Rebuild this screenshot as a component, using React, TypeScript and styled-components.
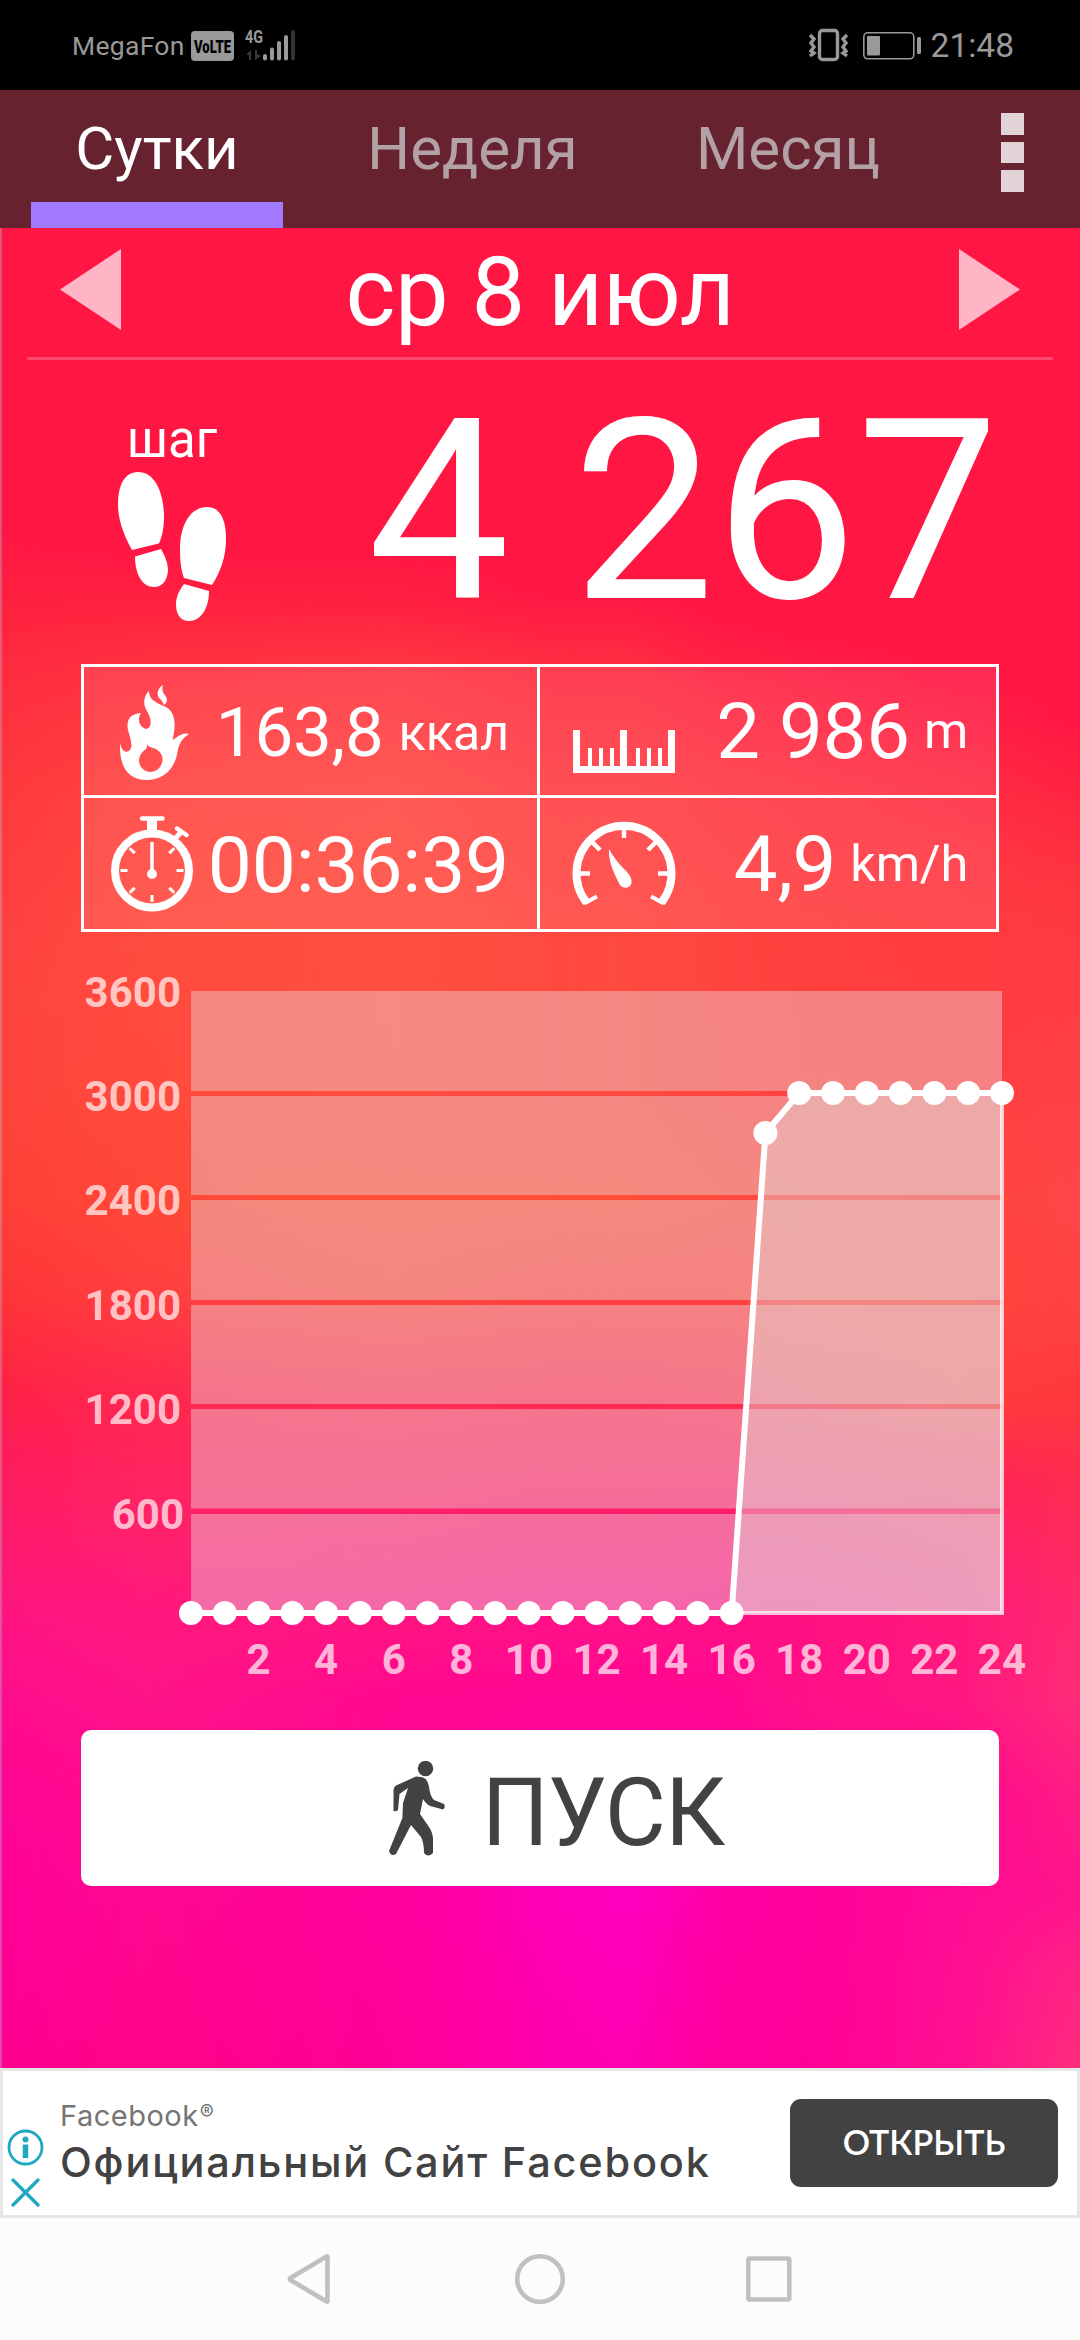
import React from "react";
import styled, { createGlobalStyle } from "styled-components";

const GlobalStyle = createGlobalStyle`
  * { box-sizing: border-box; }
  body { margin: 0; background: #000; }
`;

const Screen = styled.div`
  width: 1080px;
  height: 2340px;
  display: flex;
  flex-direction: column;
  overflow: hidden;
  font-family: Roboto, "Noto Sans", sans-serif;
  color: #fff;
`;

const StatusBar = styled.header`
  height: 90px;
  flex: none;
  display: flex;
  align-items: flex-start;
  justify-content: space-between;
  padding: 0 66px 0 72px;
  background: #000;
  color: #999;
`;

const StatusGroup = styled.div`
  display: flex;
  align-items: flex-start;
`;

const StatusText = styled.span<{ $size: number; $spacing?: number }>`
  font-size: ${(p) => p.$size}px;
  line-height: 92px;
  letter-spacing: ${(p) => p.$spacing ?? 0}px;
  white-space: nowrap;
`;

const Volte = styled.svg`
  width: 43px;
  height: 30px;
  margin: 31px 10px 0 6px;
  border-radius: 4px;
  background: #999;
  fill: #000;
  font-size: 19px;
  font-weight: 900;
  overflow: visible;
`;

const TabBar = styled.nav`
  height: 138px;
  flex: none;
  display: flex;
  gap: 63.5px;
  padding-left: 31px;
  background: #672230;
`;

const Tab = styled.div<{ $active?: boolean }>`
  width: 252px;
  text-align: center;
  font-size: 60px;
  line-height: 118px;
  height: 138px;
  white-space: nowrap;
  color: ${(p) => (p.$active ? "#fff" : "#b3a2a5")};
  border-bottom: 26px solid ${(p) => (p.$active ? "#a27aff" : "transparent")};
`;

const MenuButton = styled.div`
  margin: 23px 0 0 23px;
  display: flex;
  flex-direction: column;
  gap: 7px;
`;

const MenuDot = styled.i`
  width: 23px;
  height: 21.5px;
  background: #e2d3d6;
`;

const Main = styled.main`
  height: 1840px;
  flex: none;
  display: grid;
  grid-template: 1840px / 1080px;
`;

const Backdrop = styled.div`
  grid-area: 1 / 1;
  display: grid;
`;

const Glow = styled.div<{ $stops: string; $from: number; $to: number }>`
  grid-area: 1 / 1;
  background: linear-gradient(180deg, ${(p) => p.$stops});
  mask-image: ${(p) =>
    p.$to > 0
      ? `linear-gradient(90deg, transparent ${p.$from}px, #000 ${p.$to}px)`
      : "none"};
`;

const Content = styled.div`
  grid-area: 1 / 1;
  position: relative;
  display: flex;
  flex-direction: column;
  box-shadow: inset 2px 0 0 rgba(190, 190, 210, 0.35);
`;

const DateRow = styled.div`
  height: 129px;
  display: flex;
  justify-content: space-between;
  padding: 0 60px;
`;

const DateLabel = styled.h1`
  margin: 0;
  font-weight: 400;
  font-size: 95.5px;
  line-height: 129px;
  letter-spacing: -0.4px;
`;

const Arrow = styled.svg`
  width: 61px;
  height: 81px;
  margin-top: 21px;
  fill: #ffb5c6;
`;

const Divider = styled.hr`
  width: 1026px;
  height: 3px;
  margin: 0 auto;
  border: 0;
  background: #ff4a6e;
`;

const StepsRow = styled.section`
  height: 304px;
  display: flex;
  justify-content: space-between;
  padding: 0 81px 0 118px;
`;

const StepsLabel = styled.div`
  width: 108px;
  display: flex;
  flex-direction: column;
  align-items: center;
  padding-top: 50px;
  font-size: 51px;
  line-height: 60px;
`;

const StepsIcon = styled.svg`
  width: 108px;
  height: 149px;
  margin-top: 2px;
  fill: #fff;
`;

const StepsValue = styled.div`
  font-size: 253px;
  line-height: 304px;
  white-space: nowrap;
`;

const Stats = styled.section`
  width: 918px;
  height: 268px;
  margin: 0 auto;
  border: 3px solid #fff;
  display: grid;
  grid-template-columns: 453px 456px;
  grid-template-rows: 128px 131px;
  column-gap: 3px;
  row-gap: 3px;
`;

const Stat = styled.div<{ $pad: number; $lineRight?: boolean; $lineBottom?: boolean }>`
  display: flex;
  align-items: center;
  justify-content: space-between;
  padding: 0 28px 0 ${(p) => p.$pad}px;
  background: rgba(255, 255, 255, 0.09);
  box-shadow: ${(p) =>
    [
      p.$lineRight && "3px 0 0 #fff",
      p.$lineBottom && "0 3px 0 #fff",
      p.$lineRight && p.$lineBottom && "3px 3px 0 #fff",
      "0 0 0 transparent",
    ]
      .filter(Boolean)
      .join(",")};
`;

const StatIcon = styled.svg<{ $w: number; $h: number; $top?: number }>`
  width: ${(p) => p.$w}px;
  height: ${(p) => p.$h}px;
  margin-top: ${(p) => p.$top ?? 0}px;
  flex: none;
  overflow: visible;
`;

const StatText = styled.div`
  align-self: stretch;
  display: flex;
  align-items: flex-start;
  height: 100%;
  white-space: nowrap;
`;

const Value = styled.span<{ $size: number; $line: number }>`
  font-size: ${(p) => p.$size}px;
  line-height: ${(p) => p.$line}px;
  letter-spacing: -0.2px;
`;

const Unit = styled.span<{ $line: number; $gap: number }>`
  font-size: 50.5px;
  line-height: ${(p) => p.$line}px;
  margin-left: ${(p) => p.$gap}px;
  letter-spacing: -0.2px;
`;

const Chart = styled.svg`
  width: 1080px;
  height: 798px;
  flex: none;
  font-weight: 700;
  font-size: 42px;
`;

const StartButton = styled.button`
  width: 918px;
  height: 156px;
  margin: 0 auto;
  padding: 0 0 0 33px;
  border: 0;
  border-radius: 10px;
  background: #fff;
  color: #424242;
  display: flex;
  align-items: center;
  justify-content: center;
  gap: 37px;
  font-family: inherit;
  font-size: 94px;
  line-height: 156px;
  letter-spacing: -1px;
`;

const StartText = styled.span`
  padding-top: 9px;
`;

const Walker = styled.svg`
  width: 56px;
  height: 95px;
  fill: #424242;
`;

const Ad = styled.aside`
  height: 150px;
  flex: none;
  display: flex;
  align-items: flex-start;
  border: 3px solid #e6e6e6;
  background: #fff;
`;

const AdMarks = styled.svg`
  width: 57px;
  height: 144px;
  flex: none;
`;

const AdCopy = styled.div`
  flex: 1;
  display: flex;
  flex-direction: column;
  padding-top: 24px;
  font-family: Inter, "Noto Sans", sans-serif;
`;

const Advertiser = styled.span`
  font-size: 29px;
  line-height: 42px;
  letter-spacing: 0.5px;
  color: #757575;
`;

const Registered = styled.sup`
  font-size: 21px;
  line-height: 0;
  vertical-align: 6px;
  margin-left: 1px;
`;

const AdTitle = styled.span`
  font-size: 41.5px;
  line-height: 50px;
  font-weight: 500;
  letter-spacing: 1.8px;
  color: #424242;
  white-space: nowrap;
`;

const OpenButton = styled.button`
  width: 268px;
  height: 88px;
  margin: 28px 19px 0 0;
  padding: 0 0 4px;
  border: 0;
  border-radius: 11px;
  background: #424242;
  color: #fff;
  font-family: Lato, "Noto Sans", sans-serif;
  font-weight: 600;
  font-size: 34px;
`;

const NavBar = styled.footer`
  height: 122px;
  flex: none;
  display: flex;
  background: #fcfcfc;
`;

const NavIcons = styled.svg`
  width: 1080px;
  height: 122px;
  fill: none;
  stroke: #c0c0c0;
  stroke-width: 4.6;
  stroke-linejoin: round;
`;

type Stop = [number, string];

const middle: Stop[] = [[228, "#ff1744"], [590, "#ff1744"], [660, "#ff2c42"], [800, "#ff4044"], [940, "#ff4a40"], [1100, "#ff4a40"], [1200, "#ff4e3a"], [1300, "#ff4040"], [1400, "#ff2a50"], [1500, "#ff1e68"], [1600, "#ff1484"], [1700, "#ff0694"], [1800, "#ff02a0"]];

const columns: { x: number; stops: Stop[] }[] = [
  { x: 0, stops: [[228, "#ff1744"], [530, "#ff1744"], [620, "#ff243f"], [700, "#ff3040"], [800, "#ff3a3c"], [900, "#ff4040"], [1000, "#ff4440"], [1100, "#ff443c"], [1200, "#ff4038"], [1300, "#ff3438"], [1380, "#ff2444"], [1450, "#ff1c58"], [1550, "#ff1a70"], [1650, "#ff1288"], [1750, "#ff0890"], [1850, "#ff0498"], [1950, "#ff0098"], [2068, "#ff0090"]] },
  { x: 150, stops: [[228, "#ff1744"], [550, "#ff1744"], [600, "#ff2240"], [660, "#ff3040"], [800, "#ff4640"], [940, "#ff4c3f"], [1100, "#ff4a3c"], [1200, "#ff4838"], [1290, "#ff4040"], [1400, "#ff2850"], [1500, "#ff2464"], [1600, "#ff1a7c"], [1700, "#ff1488"], [1800, "#ff0c8e"], [1900, "#ff0890"], [2068, "#ff0488"]] },
  { x: 400, stops: [[228, "#ff1744"], [550, "#ff1744"], [600, "#ff2040"], [660, "#ff3542"], [800, "#ff4a44"], [940, "#ff5040"], [1100, "#ff4e40"], [1200, "#ff503a"], [1290, "#ff483c"], [1400, "#ff2c50"], [1500, "#ff2266"], [1600, "#ff187e"], [1700, "#ff0890"], [1800, "#ff0894"], [1900, "#ff009c"], [2068, "#ff0098"]] },
  { x: 550, stops: [...middle, [1890, "#ff00b8"], [2000, "#ff00b0"], [2068, "#ff00ae"]] },
  { x: 630, stops: [...middle, [1890, "#ff00c0"], [1980, "#ff00b8"], [2068, "#ff00b0"]] },
  { x: 720, stops: [[228, "#ff1744"], [615, "#ff1744"], [700, "#ff2a43"], [800, "#ff3b44"], [940, "#ff443f"], [1100, "#ff4540"], [1200, "#ff4a3e"], [1300, "#ff4040"], [1400, "#ff2c50"], [1500, "#ff1e6a"], [1600, "#ff1282"], [1700, "#ff0892"], [1800, "#ff049c"], [1900, "#ff00a4"], [2068, "#ff009c"]] },
  { x: 800, stops: [[228, "#ff1744"], [630, "#ff1744"], [720, "#ff2844"], [800, "#ff3844"], [940, "#ff403e"], [1100, "#ff4240"], [1200, "#ff4840"], [1300, "#ff4640"], [1400, "#ff344c"], [1500, "#ff2068"], [1600, "#ff1080"], [1700, "#ff1088"], [1800, "#ff0898"], [1900, "#ff009c"], [2068, "#ff0098"]] },
  { x: 960, stops: [[228, "#ff1744"], [680, "#ff1744"], [760, "#ff2844"], [860, "#ff3844"], [940, "#ff3c3e"], [1100, "#ff4040"], [1200, "#ff443c"], [1300, "#ff443c"], [1400, "#ff3c3e"], [1480, "#ff2458"], [1600, "#ff1a78"], [1700, "#ff1882"], [1800, "#ff0890"], [1900, "#ff0c94"], [2068, "#ff1090"]] },
  { x: 1078, stops: [[228, "#ff1744"], [720, "#ff1744"], [790, "#ff2440"], [900, "#ff3840"], [1000, "#ff3c44"], [1200, "#ff4648"], [1300, "#ff4242"], [1400, "#ff383c"], [1480, "#ff2c50"], [1600, "#ff2a6c"], [1700, "#ff2c78"], [1800, "#ff1c84"], [1900, "#ff148c"], [1975, "#ff2484"], [2068, "#ff2c7c"]] },
];

const hourly = Array.from({ length: 25 }, (_, h) => (h <= 16 ? 1613 : h === 17 ? 1133 : 1093));
const px = (h: number) => 191 + h * 33.79;
const bands = [[991, 1091], [1096, 1195], [1200, 1300], [1305, 1404], [1409, 1508.5], [1514, 1613]];
const yLabels: [string, number, number][] = [
  ["3600", 181, 1007], ["3000", 181, 1111], ["2400", 181, 1215],
  ["1800", 181, 1320], ["1200", 181, 1424], ["600", 184, 1529],
];
const rays = [0, 45, 90, 135, 180, 225, 270, 315];

export default function App() {
  const line = hourly.map((y, h) => `${px(h)},${y}`).join(" ");
  return (
    <Screen>
      <GlobalStyle />
      <StatusBar>
        <StatusGroup>
          <StatusText $size={26.5} $spacing={0.3}>MegaFon</StatusText>
          <Volte viewBox="0 0 43 30">
            <text x="3" y="22" textLength="37" lengthAdjust="spacingAndGlyphs">VoLTE</text>
          </Volte>
          <svg width="52" height="90" viewBox="243 0 52 90" fill="#999">
            <text x="244" y="43" fontSize="19" fontWeight="700" textLength="18" lengthAdjust="spacingAndGlyphs">4G</text>
            <path d="M245 55l5-5v10h-2v-5zM254 50v10l6-4-4-2v-4z" fill="#3a3a3a" />
            <rect x="262" y="54" width="4" height="6.500" rx="2" />
            <rect x="269" y="47.500" width="4" height="13" rx="2" />
            <rect x="276" y="41" width="4" height="19.500" rx="2" />
            <rect x="283" y="35" width="4" height="25.500" rx="2" />
            <rect x="290" y="30" width="4" height="30.500" rx="2" fill="#333" />
          </svg>
        </StatusGroup>
        <StatusGroup>
          <svg width="122" height="90" viewBox="808 0 122 90" fill="none" stroke="#999">
            <rect x="818.500" y="30.500" width="18" height="29" rx="3" strokeWidth="3.400" />
            <path d="M809 35l4 4-3 4 3 4-3 4 3 2-4 3M846 35l-4 4 3 4-3 4 3 4-3 2 4 3" strokeWidth="3.400" />
            <rect x="862.800" y="32.800" width="50" height="26" rx="4" strokeWidth="1.600" />
            <rect x="866" y="36" width="13" height="19.500" rx="1" fill="#999" stroke="none" />
            <rect x="916" y="37" width="4" height="17" rx="1.500" fill="#999" stroke="none" />
          </svg>
          <StatusText $size={33.5}>21:48</StatusText>
        </StatusGroup>
      </StatusBar>

      <TabBar>
        <Tab $active>Сутки</Tab>
        <Tab>Неделя</Tab>
        <Tab>Месяц</Tab>
        <MenuButton>
          <MenuDot />
          <MenuDot />
          <MenuDot />
        </MenuButton>
      </TabBar>

      <Main>
        <Backdrop>
          {columns.map((c, i) => (
            <Glow
              key={c.x}
              $from={i ? columns[i - 1].x : 0}
              $to={c.x}
              $stops={c.stops.map(([y, color]) => `${color} ${y - 228}px`).join(", ")}
            />
          ))}
        </Backdrop>
        <Content>
          <DateRow>
            <Arrow viewBox="0 0 61 81"><path d="M61 0v81L0 40.500z" /></Arrow>
            <DateLabel>ср 8 июл</DateLabel>
            <Arrow viewBox="0 0 61 81"><path d="M0 0v81l61-40.500z" /></Arrow>
          </DateRow>
          <Divider />
          <StepsRow>
            <StepsLabel>
              шаг
              <StepsIcon viewBox="118 472 108 149">
                <path d="M138 472C124 472 118 486 118 504C118 522 125 537 132 550L159 543.500C163 534 164 526 164 515C163 490 154 472 138 472Z" />
                <path d="M135 556.500L161 549C165 556 168 563 168 571C167 581 162 587 154 587C142 587 135 574 135 556.500Z" />
                <path d="M207 507C190 507 180 526 180 548C180 561 181 570 184 578L212 585C221 571 226 556 226 539C226 519 220 507 207 507Z" />
                <path d="M184 584L209 591C209 608 201 621 189 621C180 621 176 614 176 604C176 597 179 591 184 584Z" />
              </StepsIcon>
            </StepsLabel>
            <StepsValue>4 267</StepsValue>
          </StepsRow>

          <Stats>
            <Stat $pad={36} $lineRight $lineBottom>
              <StatIcon $w={69} $h={95} $top={2} viewBox="120 685 69 95" fill="#fff">
                <path d="M163 685C157 689 156 695 160 699C162 701 163 702 163.500 705C168 703 168 698 164 694C162 691 162 688 163 685Z" />
                <path fillRule="evenodd" d="M120 743C119 768 129 780 147 780C162 780 173 771 177 755C178 745 182 738 189 734C182 732 178 737 172.500 740C176 726 176 713 166 707C154 702 149 699 149 691C143 697 143 705 147 711C152 719 152 728 146 729C139 727 137 719 141 713C130 714 126 720 128 730C130 738 134 746 129 751C124 754 121 748 120 743ZM147 744C149 748 152 747 156 749C161 752 163 756 162.500 761C161 768 156 772 150.500 772C144 772 139.500 767 139 761C139 755 143 751 146 749C147 748 147 746 147 744Z" />
              </StatIcon>
              <StatText>
                <Value $size={69} $line={131}>163,8</Value>
                <Unit $line={131} $gap={15}>ккал</Unit>
              </StatText>
            </Stat>
            <Stat $pad={33} $lineBottom>
              <StatIcon $w={102} $h={43} $top={41} viewBox="573 730 102 43" fill="#fff">
                <path d="M573 730h7v36h8v-18h4v18h7v-18h4v18h7v-18h4v18h6v-36h7v36h9v-18h4v18h7v-18h4v18h7v-18h4v18h6v-36h7v43h-102z" />
              </StatIcon>
              <StatText>
                <Value $size={78} $line={129}>2 986</Value>
                <Unit $line={128} $gap={14}>m</Unit>
              </StatText>
            </Stat>
            <Stat $pad={27} $lineRight>
              <StatIcon $w={82} $h={95} viewBox="111 817 82 95" fill="none" stroke="#fff">
                <circle cx="152" cy="871.500" r="37" strokeWidth="8" />
                <path d="M142 819.500h20.500M177 829.500l9.500 6.500" strokeWidth="4.500" strokeLinecap="round" />
                <path d="M152 820v14" strokeWidth="10" />
                <path d="M182 832l-8 9" strokeWidth="5" />
                <path d="M152 843v31" strokeWidth="3.500" />
                <circle cx="152" cy="875" r="3" strokeWidth="4" fill="#fff" />
                {rays.slice(1).map((a) => (
                  <path key={a} d="M152 840v7" strokeWidth="3" transform={`rotate(${a} 152 871.5)`} />
                ))}
              </StatIcon>
              <StatText>
                <Value $size={78.5} $line={134}>00:36:39</Value>
              </StatText>
            </Stat>
            <Stat $pad={32}>
              <StatIcon $w={104} $h={84} viewBox="572 822 104 84" fill="none" stroke="#fff">
                <path d="M586.500 902.500A47.500 47.500 0 1 1 661.500 902.500" strokeWidth="8" />
                <path d="M584 903.500l13-7M664 903.500l-13-7" strokeWidth="4" />
                <path d="M624 828v10M578 873.500h12M670 873.500h-12M591 841l9 9M657 841l-9 9" strokeWidth="4.500" />
                <path d="M609 849C608 859 613 872 620 885C623 889 630 889 631.500 883C632 879 630 875 627 872C619 864 613 857 609 849Z" fill="#fff" stroke="none" />
              </StatIcon>
              <StatText>
                <Value $size={78} $line={134}>4,9</Value>
                <Unit $line={132} $gap={14}>km/h</Unit>
              </StatText>
            </Stat>
          </Stats>

          <Chart viewBox="0 932 1080 798">
            {bands.map(([a, b]) => (
              <rect key={a} x="191" y={a} width="811" height={b - a} fill="rgba(230,230,230,0.4)" />
            ))}
            <polygon points={`${px(16)},1613 ${px(17)},1133 ${px(18)},1093 1002,1093 1002,1613`} fill="rgba(226,222,222,0.42)" />
            <path d={`M${px(16)} 1613H1002V1093`} fill="none" stroke="#fff" strokeOpacity="0.72" strokeWidth="4" />
            <polyline points={line} fill="none" stroke="#fff" strokeWidth="6" />
            {hourly.map((y, h) => (
              <circle key={h} cx={px(h)} cy={y} r="12" fill="#fff" />
            ))}
            <g fill="#fff" fillOpacity="0.7">
              {yLabels.map(([t, x, y]) => (
                <text key={t} x={x} y={y} textAnchor="end">{t}</text>
              ))}
              {Array.from({ length: 12 }, (_, i) => (i + 1) * 2).map((h) => (
                <text key={h} x={px(h)} y="1674" textAnchor="middle">{h}</text>
              ))}
            </g>
          </Chart>

          <StartButton>
            <Walker viewBox="389 1761 56 95">
              <ellipse cx="425.500" cy="1768.500" rx="7.800" ry="7.700" />
              <path d="M416 1776.500L396 1785.500Q393.500 1787 393.500 1790V1811Q396 1812 398 1810L399.500 1794L408 1788L403 1803L402.400 1818L389 1851Q391 1857 396 1854L411 1825L421 1837Q424 1843 424 1853Q428 1858 433 1853V1838Q432 1831 429 1827L420 1814L423 1799Q427 1806 434 1807L443 1809.500Q446 1807 444 1804L434 1800Q430 1796 429 1787Q427 1777 421 1777Z" />
            </Walker>
            <StartText>ПУСК</StartText>
          </StartButton>
        </Content>
      </Main>

      <Ad>
        <AdMarks viewBox="3 2071 57 144" fill="none" stroke="#1fa8bf">
          <circle cx="25.500" cy="2147.500" r="16.500" strokeWidth="2.800" />
          <path d="M25.500 2144.500v13.500" strokeWidth="5.500" />
          <circle cx="25.500" cy="2139.500" r="3" fill="#1fa8bf" stroke="none" />
          <path d="M13 2180l25 25M38 2180l-25 25" strokeWidth="3.400" strokeLinecap="round" />
        </AdMarks>
        <AdCopy>
          <Advertiser>Facebook<Registered>®</Registered></Advertiser>
          <AdTitle>Официальный Сайт Facebook</AdTitle>
        </AdCopy>
        <OpenButton>ОТКРЫТЬ</OpenButton>
      </Ad>

      <NavBar>
        <NavIcons viewBox="0 2218 1080 122">
          <path d="M327.500 2257v44q0 1-1 .5l-36-21.500q-1-1 0-2l36-21.500q1-.5 1 .5z" />
          <circle cx="540" cy="2279" r="22.800" />
          <rect x="748.300" y="2258.500" width="41" height="41" rx="1.500" />
        </NavIcons>
      </NavBar>
    </Screen>
  );
}
